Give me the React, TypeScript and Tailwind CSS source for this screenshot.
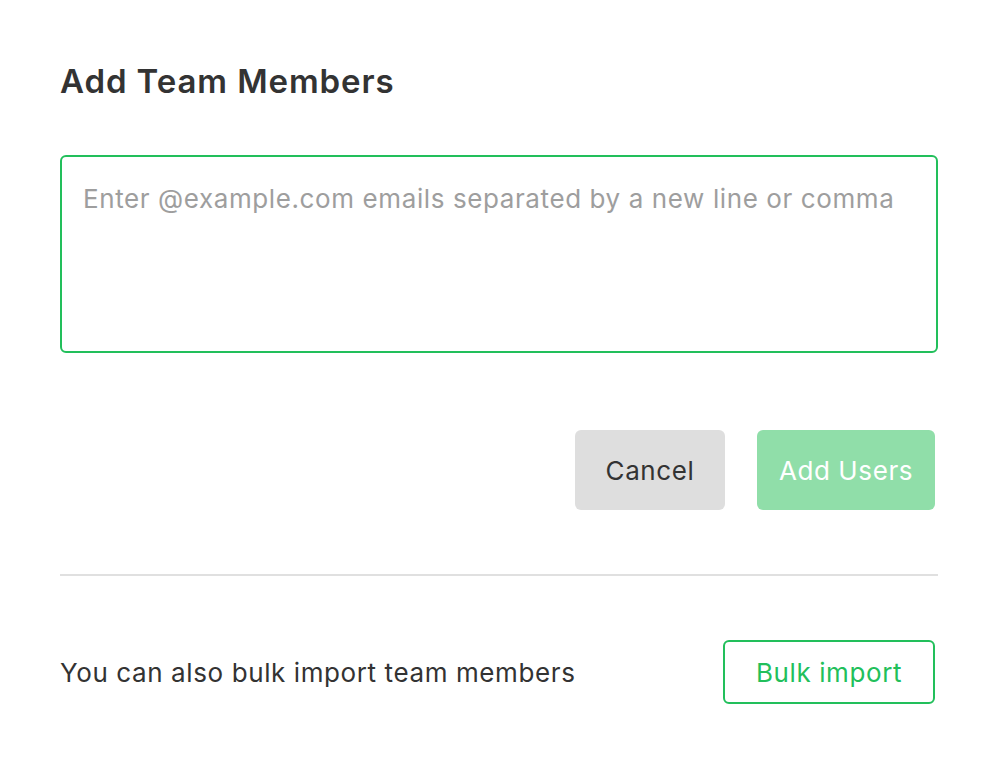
import { FC } from 'react';

const App: FC = () => {
  return (
    <div className="w-[998px] h-[766px] bg-white text-[#333333] font-['Inter',_'Noto_Sans',_sans-serif] text-[26px] tracking-[0.6px]">
      <div className="pl-[60px] pr-[60px] pt-[61px]">
        {/* Header */}
        <h1 className="text-[33px] leading-[40px] font-semibold tracking-[0.9px] text-[#333333]">Add Team Members</h1>

        {/* Email input */}
        <textarea
          className="mt-[54px] block w-[878px] h-[198px] rounded-[6px] border-2 border-[#22bf5b] px-[21px] py-[27px] text-[26px] leading-[30px] tracking-[0.6px] resize-none outline-none placeholder:text-[#9e9e9e]"
          placeholder="Enter @example.com emails separated by a new line or comma"
        />

        {/* Actions */}
        <div className="mt-[77px] flex justify-end gap-[32px] pr-[3px]">
          <button className="w-[150px] h-[80px] rounded-[6px] bg-[#dedede] text-[#333333]">Cancel</button>
          <button className="w-[178px] h-[80px] rounded-[6px] bg-[#90dea9] text-white">Add Users</button>
        </div>

        <div className="mt-[64px] h-[2px] w-[878px] bg-[#e0e0e0]" />

        {/* Bulk import */}
        <div className="mt-[64px] flex items-center justify-between pr-[3px]">
          <span className="text-[#333333]">You can also bulk import team members</span>
          <button className="w-[212px] h-[64px] rounded-[6px] border-2 border-[#22bf5b] text-[#22bf5b]">
            Bulk import
          </button>
        </div>
      </div>
    </div>
  );
};

export default App;
